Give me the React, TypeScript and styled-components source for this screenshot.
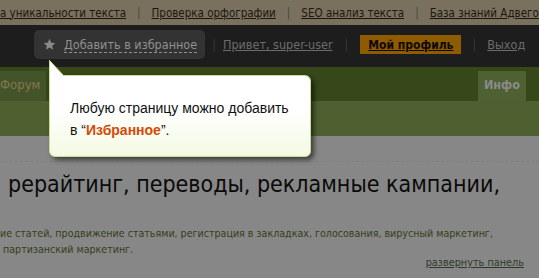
import React from "react";
import styled, { createGlobalStyle } from "styled-components";

const Global = createGlobalStyle`
  html, body { margin: 0; padding: 0; }
  body { width: 539px; height: 278px; overflow: hidden; background: #878787; }
`;

const Page = styled.div`
  position: relative;
  width: 539px;
  height: 278px;
  overflow: hidden;
  font-family: "DejaVu Sans Condensed", "DejaVu Sans", sans-serif;
`;

const TopBar = styled.div`
  height: 25px;
  background: #7a705e;
  display: flex;
  align-items: center;
  white-space: nowrap;
  font-size: 11.5px;
`;

const TopLink = styled.a`
  color: #1b1812;
  text-decoration: underline;
`;

const Sep = styled.span<{ $c?: string; $m?: number }>`
  color: ${(p) => p.$c || "#3f4a48"};
  margin: 0 ${(p) => p.$m ?? 10}px;
`;

const DarkBar = styled.div`
  height: 42px;
  background: #1d1d1d;
  display: flex;
  align-items: flex-start;
  padding: 5px 0 0 34px;
  box-sizing: border-box;
  white-space: nowrap;
  font-size: 12.5px;
`;

const BarItem = styled.div`
  height: 29px;
  display: flex;
  align-items: center;
`;

const FavBox = styled.div`
  height: 29px;
  background: #333333;
  border-radius: 5px;
  display: flex;
  align-items: center;
  gap: 8px;
  padding: 0 8px 0 9px;
`;

const DashedText = styled.span`
  color: #8f8f8f;
  border-bottom: 1px dashed #8f8f8f;
  line-height: 15px;
`;

const GrayLink = styled.a`
  color: #6c6c6c;
  text-decoration: underline;
`;

const ProfileBtn = styled.a`
  background: #8e5b00;
  color: #0d0a05;
  text-decoration: underline;
  font-weight: bold;
  padding: 0 8px;
  height: 19px;
  display: flex;
  align-items: center;
  font-size: 12px;
`;

const Nav = styled.div`
  height: 34px;
  background: #36471a;
  display: flex;
  align-items: flex-end;
  justify-content: space-between;
  font-size: 12.5px;
`;

const Tab = styled.div<{ $bg: string; $color: string }>`
  height: 30px;
  box-sizing: border-box;
  padding: 0 6px 4px 6px;
  background: ${(p) => p.$bg};
  color: ${(p) => p.$color};
  display: flex;
  align-items: center;
  justify-content: center;
  font-weight: bold;
  &:first-child {
    padding-left: 0;
    font-weight: normal;
    font-size: 13px;
  }
`;

const Band = styled.div`
  height: 35px;
  background: #4e6030;
`;

const Content = styled.div`
  height: 142px;
  background: #878787;
  padding-top: 33px;
  box-sizing: border-box;
  position: relative;
`;

const Dotted = styled.div`
  position: absolute;
  left: 0;
  right: 0;
  top: 25px;
  border-top: 1px dashed #7f7f7f;
`;

const Heading = styled.h1`
  margin: 0;
  padding-left: 8px;
  font-weight: normal;
  font-size: 23px;
  line-height: 30px;
  color: #0a0a0a;
  white-space: nowrap;
`;

const Desc = styled.p`
  margin: 26px 0 0 0;
  font-size: 10.6px;
  line-height: 16px;
  color: #34401c;
  white-space: nowrap;
`;

const Expand = styled.div`
  display: flex;
  justify-content: flex-end;
  padding-right: 15px;
  font-size: 10.8px;
  line-height: 12px;
`;

const ExpandLink = styled.a`
  color: #2e3a2a;
  text-decoration: underline;
`;

const Tooltip = styled.div`
  position: absolute;
  left: 49px;
  top: 75px;
  width: 262px;
  height: 82px;
  box-sizing: border-box;
  border: 1px solid #c9dd94;
  border-radius: 0 6px 6px 6px;
  background: linear-gradient(#ffffff 40%, #f3fae3);
  box-shadow: 3px 3px 5px rgba(0, 0, 0, 0.55);
  padding: 21px 0 0 20px;
  font-family: "Liberation Sans", Arial, sans-serif;
  font-size: 14px;
  line-height: 22px;
  color: #111;
`;

const Pointer = styled.svg`
  position: absolute;
  left: -1px;
  top: -16px;
`;

const Strong = styled.b`
  color: #d34a06;
`;

function Star() {
  return (
    <svg width="13" height="13" viewBox="0 0 24 24">
      <path
        d="M12 1.5l3.1 7.1 7.6.6-5.8 5 1.8 7.5L12 17.7l-6.7 4 1.8-7.5-5.8-5 7.6-.6z"
        fill="#8a8a8a"
      />
    </svg>
  );
}

export default function App() {
  return (
    <Page>
      <Global />
      <TopBar>
        <TopLink>а уникальности текста</TopLink>
        <Sep $m={11}>|</Sep>
        <TopLink>Проверка орфографии</TopLink>
        <Sep $m={11}>|</Sep>
        <TopLink>SEO анализ текста</TopLink>
        <Sep $m={11}>|</Sep>
        <TopLink>База знаний Адвего</TopLink>
      </TopBar>
      <DarkBar>
        <FavBox>
          <Star />
          <DashedText>Добавить в избранное</DashedText>
        </FavBox>
        <BarItem>
          <Sep $c="#3a3a3a" $m={7}>|</Sep>
        </BarItem>
        <BarItem>
          <GrayLink>Привет, super-user</GrayLink>
        </BarItem>
        <BarItem>
          <Sep $c="#3a3a3a" $m={12}>|</Sep>
        </BarItem>
        <BarItem>
          <ProfileBtn>Мой профиль</ProfileBtn>
        </BarItem>
        <BarItem>
          <Sep $c="#3a3a3a" $m={11}>|</Sep>
        </BarItem>
        <BarItem>
          <GrayLink>Выход</GrayLink>
        </BarItem>
      </DarkBar>
      <Nav>
        <Tab $bg="#43542a" $color="#86764c">Форум</Tab>
        <Tab $bg="#4f6032" $color="#8a8a8a" style={{ marginRight: 13 }}>
          Инфо
        </Tab>
      </Nav>
      <Band />
      <Content>
        <Dotted />
        <Heading>рерайтинг, переводы, рекламные кампании,</Heading>
        <Desc>
          ие статей, продвижение статьями, регистрация в закладках, голосования, вирусный маркетинг,
          <br />
          &nbsp;партизанский маркетинг.
        </Desc>
        <Expand>
          <ExpandLink>развернуть панель</ExpandLink>
        </Expand>
      </Content>
      <Tooltip>
        <Pointer width="16" height="16" viewBox="0 0 16 16">
          <path d="M0 0 L0 16 L15 16 Z" fill="#ffffff" />
          <path d="M0.5 0 L0.5 16 M0.5 0.5 L15 16" stroke="#c9dd94" strokeWidth="1" fill="none" />
        </Pointer>
        Любую страницу можно добавить
        <br />в “<Strong>Избранное</Strong>”.
      </Tooltip>
    </Page>
  );
}
